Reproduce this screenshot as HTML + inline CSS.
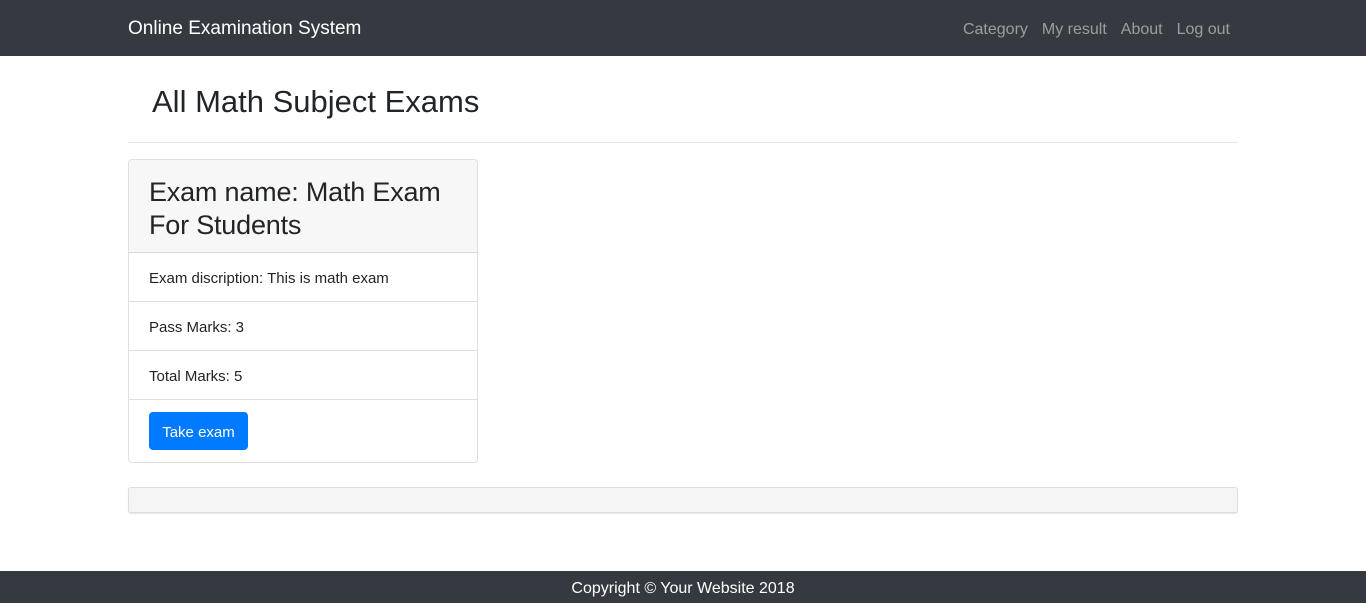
<!DOCTYPE html>
<html><head><meta charset="utf-8"><style>
*{box-sizing:border-box;margin:0;padding:0}
body{width:1366px;height:603px;position:relative;font-family:"Liberation Sans",sans-serif;color:#212529;background:#fff;overflow:hidden}
.nav{position:absolute;top:0;left:0;width:1366px;height:56px;background:#343a40}
.brand{position:absolute;left:128px;top:18px;font-size:19px;color:#fff}
.links{position:absolute;right:136px;top:21px;font-size:16px;color:rgba(255,255,255,.5)}
.links span{margin-left:14px}
h1{position:absolute;left:152px;top:84px;font-size:31px;font-weight:400}
.hr{position:absolute;left:128px;top:142px;width:1110px;border-top:1px solid #e5e5e5}
.card{position:absolute;left:128px;top:159px;width:350px;height:304px;border:1px solid rgba(0,0,0,.125);border-radius:4px;overflow:hidden}
.ch{height:93px;background:#f7f7f7;border-bottom:1px solid rgba(0,0,0,.125);padding:16px 20px;font-size:27px;line-height:33px;letter-spacing:-0.2px}
.li{height:49px;border-bottom:1px solid rgba(0,0,0,.125);padding:17px 20px 0;font-size:15px}
.btn{position:absolute;left:20px;top:252px;width:99px;height:38px;background:#007bff;color:#fff;border-radius:4px;font-size:15px;text-align:center;line-height:41px}
.box{position:absolute;left:128px;top:487px;width:1110px;height:26px;background:#f5f5f5;border:1px solid #ddd;border-radius:3px;box-shadow:0 1px 1px rgba(0,0,0,.1)}
.foot{position:absolute;left:0;top:571px;width:1366px;height:32px;background:#343a40;color:#fff;text-align:center;font-size:16px;line-height:36px}
</style></head><body>
<div class="nav"><div class="brand">Online Examination System</div>
<div class="links"><span>Category</span><span>My result</span><span>About</span><span>Log out</span></div></div>
<h1>All Math Subject Exams</h1>
<div class="hr"></div>
<div class="card">
<div class="ch">Exam name: Math Exam For Students</div>
<div class="li">Exam discription: This is math exam</div>
<div class="li">Pass Marks: 3</div>
<div class="li">Total Marks: 5</div>
<div class="btn">Take exam</div>
</div>
<div class="box"></div>
<div class="foot">Copyright © Your Website 2018</div>
</body></html>
